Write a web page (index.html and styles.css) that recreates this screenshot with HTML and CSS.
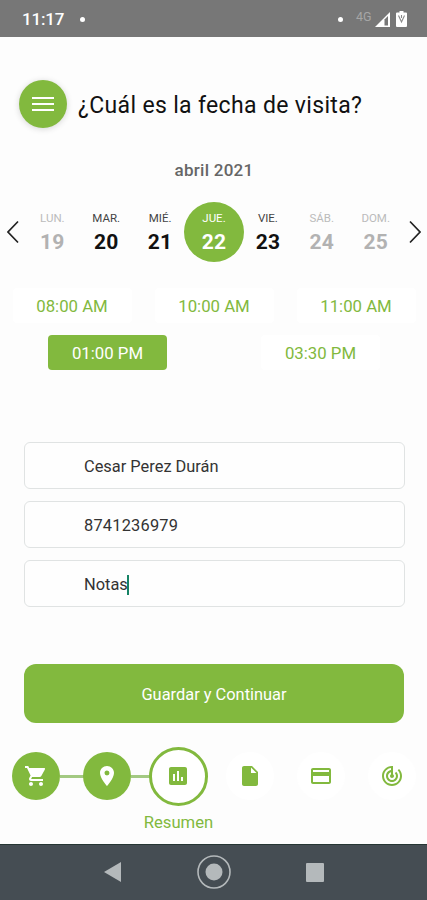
FILE: index.html
```html
<!DOCTYPE html>
<html lang="es">
<head>
<meta charset="utf-8">
<title>Fecha de visita</title>
<link rel="stylesheet" href="styles.css">
</head>
<body>
<div class="status">
  <span class="clock">11:17</span><i class="dot"></i>
  <span class="spacer"></span>
  <i class="dot"></i><span class="network">4G</span>
  <svg class="signal" width="15" height="15" viewBox="0 0 15 15"><path d="M15 0V15H0z" fill="#fff"/><path d="M13 4v9.500H9.500V7.500z" fill="#777"/></svg>
  <svg class="battery" width="11" height="17" viewBox="0 0 11 17"><path d="M3.500 0h4v1.500H10q1 0 1 1V15q0 1-1 1H1q-1 0-1-1V2.500q0-1 1-1h2.500z" fill="#fff"/><path d="M2.500 4.500 5.500 11 8.500 4.500M5.500 4v3" fill="none" stroke="#888" stroke-width="1.100"/></svg>
</div>
<header class="header">
  <button class="menu" aria-label="Menú"><i></i><i></i><i></i></button>
  <h1>¿Cuál es la fecha de visita?</h1>
</header>
<div class="month">abril 2021</div>
<div class="week">
  <svg class="arrow" width="12" height="24" viewBox="0 0 12 24"><path d="M11 1.500 1 12 11 22.500"/></svg>
  <div class="days">
    <div class="day off"><small>LUN.</small><b>19</b></div>
    <div class="day"><small>MAR.</small><b>20</b></div>
    <div class="day"><small>MIÉ.</small><b>21</b></div>
    <div class="day selected"><small>JUE.</small><b>22</b></div>
    <div class="day"><small>VIE.</small><b>23</b></div>
    <div class="day off"><small>SÁB.</small><b>24</b></div>
    <div class="day off"><small>DOM.</small><b>25</b></div>
  </div>
  <svg class="arrow" width="12" height="24" viewBox="0 0 12 24"><path d="M1 1.500 11 12 1 22.500"/></svg>
</div>
<div class="times">
  <div class="row"><span class="time">08:00 AM</span><span class="time">10:00 AM</span><span class="time">11:00 AM</span></div>
  <div class="row"><span class="time active">01:00 PM</span><span class="time">03:30 PM</span></div>
</div>
<div class="form">
  <div class="field name">Cesar Perez Durán</div>
  <div class="field phone">8741236979</div>
  <div class="field notes">Notas<i class="caret"></i></div>
</div>
<button class="save">Guardar y Continuar</button>
<div class="steps">
  <div class="step done"><svg viewBox="0 0 24 24"><path d="M7 18c-1.100 0-1.990.9-1.990 2S5.900 22 7 22s2-.9 2-2-.9-2-2-2zM1 2v2h2l3.600 7.590-1.350 2.450c-.16.280-.25.610-.25.960 0 1.100.9 2 2 2h12v-2H7.420c-.14 0-.25-.11-.25-.25l.03-.12.900-1.630h7.450c.75 0 1.410-.41 1.750-1.030l3.580-6.490A1 1 0 0 0 20 4H5.210l-.94-2H1zm16 16c-1.100 0-1.990.9-1.990 2s.89 2 1.990 2 2-.9 2-2-.9-2-2-2z"/></svg></div>
  <div class="step done"><svg viewBox="0 0 24 24"><path d="M12 2C8.130 2 5 5.130 5 9c0 5.250 7 13 7 13s7-7.750 7-13c0-3.870-3.130-7-7-7zm0 9.500a2.500 2.500 0 0 1 0-5 2.500 2.500 0 0 1 0 5z"/></svg></div>
  <div class="step current"><svg viewBox="0 0 24 24"><path d="M19 3H5c-1.100 0-2 .9-2 2v14c0 1.100.9 2 2 2h14c1.100 0 2-.9 2-2V5c0-1.100-.9-2-2-2zM9 17H7v-7h2v7zm4 0h-2V7h2v10zm4 0h-2v-4h2v4z"/></svg><span class="label">Resumen</span></div>
  <div class="step"><svg viewBox="0 0 24 24"><path d="M6 2c-1.100 0-2 .9-2 2v16c0 1.100.9 2 2 2h12c1.100 0 2-.9 2-2V8l-6-6H6zm7 7V3.500L18.500 9H13z"/></svg></div>
  <div class="step"><svg viewBox="0 0 24 24"><path d="M20 4H4c-1.110 0-2 .89-2 2v12c0 1.110.89 2 2 2h16c1.110 0 2-.89 2-2V6c0-1.110-.89-2-2-2zm0 14H4v-6h16v6zm0-10H4V6h16v2z"/></svg></div>
  <div class="step"><svg viewBox="0 0 24 24"><path d="M19.070 4.930l-1.410 1.410C19.100 7.790 20 9.790 20 12c0 4.420-3.580 8-8 8s-8-3.580-8-8c0-4.080 3.050-7.440 7-7.930v2.020C8.160 6.570 6 9.030 6 12c0 3.310 2.690 6 6 6s6-2.690 6-6c0-1.660-.67-3.160-1.760-4.240l-1.410 1.410C15.550 9.900 16 10.900 16 12c0 2.210-1.790 4-4 4s-4-1.790-4-4c0-1.860 1.280-3.410 3-3.860v2.140c-.6.350-1 .98-1 1.720 0 1.100.9 2 2 2s2-.9 2-2c0-.74-.4-1.380-1-1.720V2h-1C6.480 2 2 6.480 2 12s4.480 10 10 10 10-4.480 10-10c0-2.760-1.120-5.260-2.930-7.070z"/></svg></div>
</div>
<nav class="navbar">
  <svg width="17" height="20" viewBox="0 0 17 20"><path d="M17 0v20L0 10z"/></svg>
  <svg width="34" height="34" viewBox="0 0 34 34"><circle cx="17" cy="17" r="16" fill="none" stroke="#b4b9bb" stroke-width="1.600"/><circle cx="17" cy="17" r="8.500"/></svg>
  <svg width="18" height="19" viewBox="0 0 18 19"><rect width="18" height="19" rx="1"/></svg>
</nav>
</body>
</html>
```
FILE: styles.css
```css
* { box-sizing: border-box; }
body {
  margin: 0;
  width: 427px;
  height: 900px;
  overflow: hidden;
  display: flex;
  flex-direction: column;
  background: #fdfdfd;
  color: #111;
  font-family: Roboto, sans-serif;
}
button { border: 0; padding: 0; font-family: inherit; }
svg { display: block; flex: none; }

.status {
  height: 37px;
  flex: none;
  display: flex;
  align-items: center;
  padding: 1px 20px 0 22px;
  background: #777;
  color: #fff;
}
.clock { font-size: 17px; font-weight: 500; letter-spacing: -.2px; width: 58px; }
.dot { width: 5px; height: 5px; border-radius: 50%; background: #fff; }
.spacer { flex: 1; }
.network { margin-left: 13px; margin-top: -6px; width: 19px; font-size: 12.500px; color: #a6a6a6; }
.signal { margin-top: 1px; }
.battery { margin-left: 6px; }

.header { height: 48px; flex: none; margin: 43px 0 0 19px; display: flex; align-items: center; }
.menu {
  width: 48px;
  height: 48px;
  border-radius: 50%;
  background: #82b93e;
  box-shadow: 0 1px 6px rgba(0, 0, 0, .16);
  display: flex;
  flex-direction: column;
  align-items: center;
  justify-content: center;
  gap: 4px;
}
.menu i { width: 22px; height: 2px; background: #fff; }
h1 { margin: 4px 0 0 11px; font-size: 23px; line-height: 28px; font-weight: 400; letter-spacing: .34px; white-space: nowrap; }

.month { margin-top: 32px; height: 21px; flex: none; line-height: 21px; text-align: center; font-size: 17px; font-weight: 500; letter-spacing: .25px; color: #666; padding-left: 1px; }

.week { margin-top: 21px; height: 60px; flex: none; display: flex; align-items: center; justify-content: space-between; padding: 0 6px 0 7px; }
.arrow { fill: none; stroke: #222; stroke-width: 1.700; }
.days { display: grid; grid-template-columns: repeat(7, 53.900px); justify-items: center; }
.day { width: 60px; height: 60px; display: flex; flex-direction: column; align-items: center; padding-top: 9px; white-space: nowrap; }
.day small { font-size: 11.500px; line-height: 15px; color: #444; }
.day b { font-size: 21px; line-height: 26px; margin-top: 3px; font-weight: 700; letter-spacing: .2px; }
.day.off small { color: #bbb; }
.day.off b { color: #b2b2b2; }
.day.selected { background: #82b93e; border-radius: 50%; color: #fff; }
.day.selected small { color: #fff; }

.times { margin-top: 26px; flex: none; display: flex; flex-direction: column; gap: 12px; padding-left: 1px; }
.row { display: flex; justify-content: space-around; }
.time { width: 119px; height: 35px; line-height: 36px; text-align: center; font-size: 16.800px; color: #82b93e; background: #fff; border-radius: 4px; }
.time.active { color: #fff; background: #82b93e; }

.form { margin: 72px 22px 0 24px; flex: none; display: flex; flex-direction: column; gap: 12px; }
.field { height: 47px; border: 1px solid #e0e3e3; border-radius: 6px; background: #fefefe; padding: 2px 0 0 59px; display: flex; align-items: center; font-size: 16.400px; color: #333; }
.phone { letter-spacing: .2px; }
.caret { width: 2px; height: 20px; margin-left: -.5px; background: #168365; }

.save { margin: 57px 23px 0 24px; height: 59px; flex: none; border-radius: 12px; background: #82b93e; color: #fff; font-size: 16.400px; padding-top: 1px; }

.steps { margin-top: 23px; height: 60px; flex: none; padding: 0 0 0 .5px; display: grid; grid-template-columns: repeat(6, 71.200px); align-items: center; }
.step { position: relative; width: 48px; height: 48px; margin: 0 auto; border-radius: 50%; background: #fff; display: flex; align-items: center; justify-content: center; }
.step svg { width: 24px; height: 24px; fill: #82b93e; }
.step.done { background: #82b93e; }
.step.done svg { fill: #fff; }
.step.done::after { content: ""; position: absolute; left: 48px; top: 23px; width: 24px; height: 3px; background: #a3c982; }
.step.current { width: 59px; height: 59px; border: 3px solid #82b93e; z-index: 1; }
.label { position: absolute; top: 62px; left: 50%; transform: translateX(-50%); font-size: 16.700px; line-height: 22px; color: #82b93e; }

.navbar { margin-top: auto; height: 56px; flex: none; display: flex; align-items: center; justify-content: space-between; padding: 0 103px 1px 104px; background: #454d53; border-top: 1px solid #263634; fill: #b4b9bb; }
```
